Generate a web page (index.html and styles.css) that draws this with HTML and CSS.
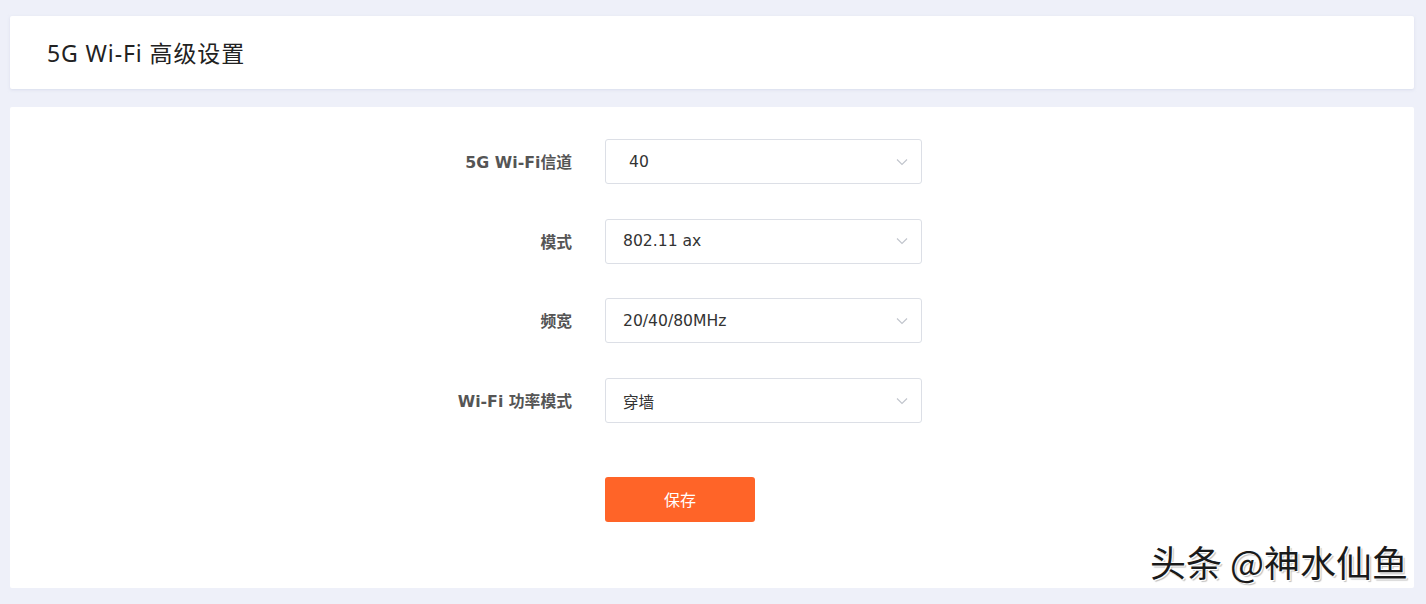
FILE: index.html
```html
<!DOCTYPE html>
<html lang="zh">
<head>
<meta charset="utf-8">
<title>5G Wi-Fi 高级设置</title>
<link rel="stylesheet" href="styles.css">
</head>
<body>
<div class="page">
  <div class="card header">
    <h1 class="title">5G Wi-Fi 高级设置</h1>
  </div>
  <div class="card content">
    <form class="form">
      <div class="row">
        <label class="label">5G Wi-Fi信道</label>
        <div class="select"><span class="value value-indent">40</span><svg class="arrow" viewBox="0 0 12 8" width="12" height="8"><path d="M1 1.5 L6 6.5 L11 1.5" fill="none" stroke="#c0c4cc" stroke-width="1.1"/></svg></div>
      </div>
      <div class="row">
        <label class="label">模式</label>
        <div class="select"><span class="value">802.11 ax</span><svg class="arrow" viewBox="0 0 12 8" width="12" height="8"><path d="M1 1.5 L6 6.5 L11 1.5" fill="none" stroke="#c0c4cc" stroke-width="1.1"/></svg></div>
      </div>
      <div class="row">
        <label class="label">频宽</label>
        <div class="select"><span class="value">20/40/80MHz</span><svg class="arrow" viewBox="0 0 12 8" width="12" height="8"><path d="M1 1.5 L6 6.5 L11 1.5" fill="none" stroke="#c0c4cc" stroke-width="1.1"/></svg></div>
      </div>
      <div class="row">
        <label class="label">Wi-Fi 功率模式</label>
        <div class="select"><span class="value">穿墙</span><svg class="arrow" viewBox="0 0 12 8" width="12" height="8"><path d="M1 1.5 L6 6.5 L11 1.5" fill="none" stroke="#c0c4cc" stroke-width="1.1"/></svg></div>
      </div>
      <div class="row actions">
        <span class="label"></span>
        <button type="button" class="btn">保存</button>
      </div>
    </form>
    <div class="watermark">头条 @神水仙鱼</div>
  </div>
</div>
</body>
</html>
```
FILE: styles.css
```css
html, body {
  margin: 0;
  padding: 0;
  background: #eef0f9;
  font-family: "Noto Sans", "Noto Sans CJK SC", sans-serif;
}
.page {
  padding: 16px 12px 0 10px;
  display: flex;
  flex-direction: column;
  gap: 18px;
}
.card {
  background: #ffffff;
  border-radius: 2px;
}
.header {
  height: 73px;
  display: flex;
  align-items: center;
  padding-left: 37px;
  box-sizing: border-box;
  box-shadow: 0 1px 3px rgba(200, 205, 225, 0.5);
}
.title {
  margin: 0;
  font-size: 23px;
  font-weight: 400;
  color: #222;
  letter-spacing: 0.9px;
  position: relative;
  top: -1px;
}
.content {
  height: 481px;
  position: relative;
  padding-top: 32px;
  box-sizing: border-box;
}
.form {
  display: flex;
  flex-direction: column;
  gap: 34.7px;
}
.row {
  display: flex;
  align-items: center;
  gap: 33px;
}
.label {
  width: 562px;
  text-align: right;
  font-family: "DejaVu Sans", "Noto Sans CJK SC", sans-serif;
  font-size: 15.8px;
  font-weight: 700;
  color: #555;
}
.select {
  width: 317px;
  height: 45px;
  box-sizing: border-box;
  border: 1px solid #dcdfe6;
  border-radius: 3px;
  display: flex;
  align-items: center;
  justify-content: space-between;
  padding: 0 13px 0 17px;
}
.value {
  font-family: "DejaVu Sans", "Noto Sans CJK SC", sans-serif;
  font-size: 15.6px;
  color: #333;
}
.value-indent {
  padding-left: 6px;
}
.arrow {
  display: block;
}
.actions {
  margin-top: 19px;
}
.btn {
  width: 150px;
  height: 45px;
  border: none;
  border-radius: 3px;
  background: #ff6428;
  color: #fff;
  font-family: "Noto Sans CJK SC", sans-serif;
  font-size: 16px;
  padding: 0;
}
.watermark {
  position: absolute;
  right: 6px;
  bottom: 1px;
  font-size: 36px;
  color: #1a1a1a;
  font-family: "Noto Sans CJK SC", sans-serif;
  text-shadow: 1px 1px 0 #fff, -1px -1px 0 #fff, 2px 2px 1px rgba(0,0,0,0.25);
}
```
